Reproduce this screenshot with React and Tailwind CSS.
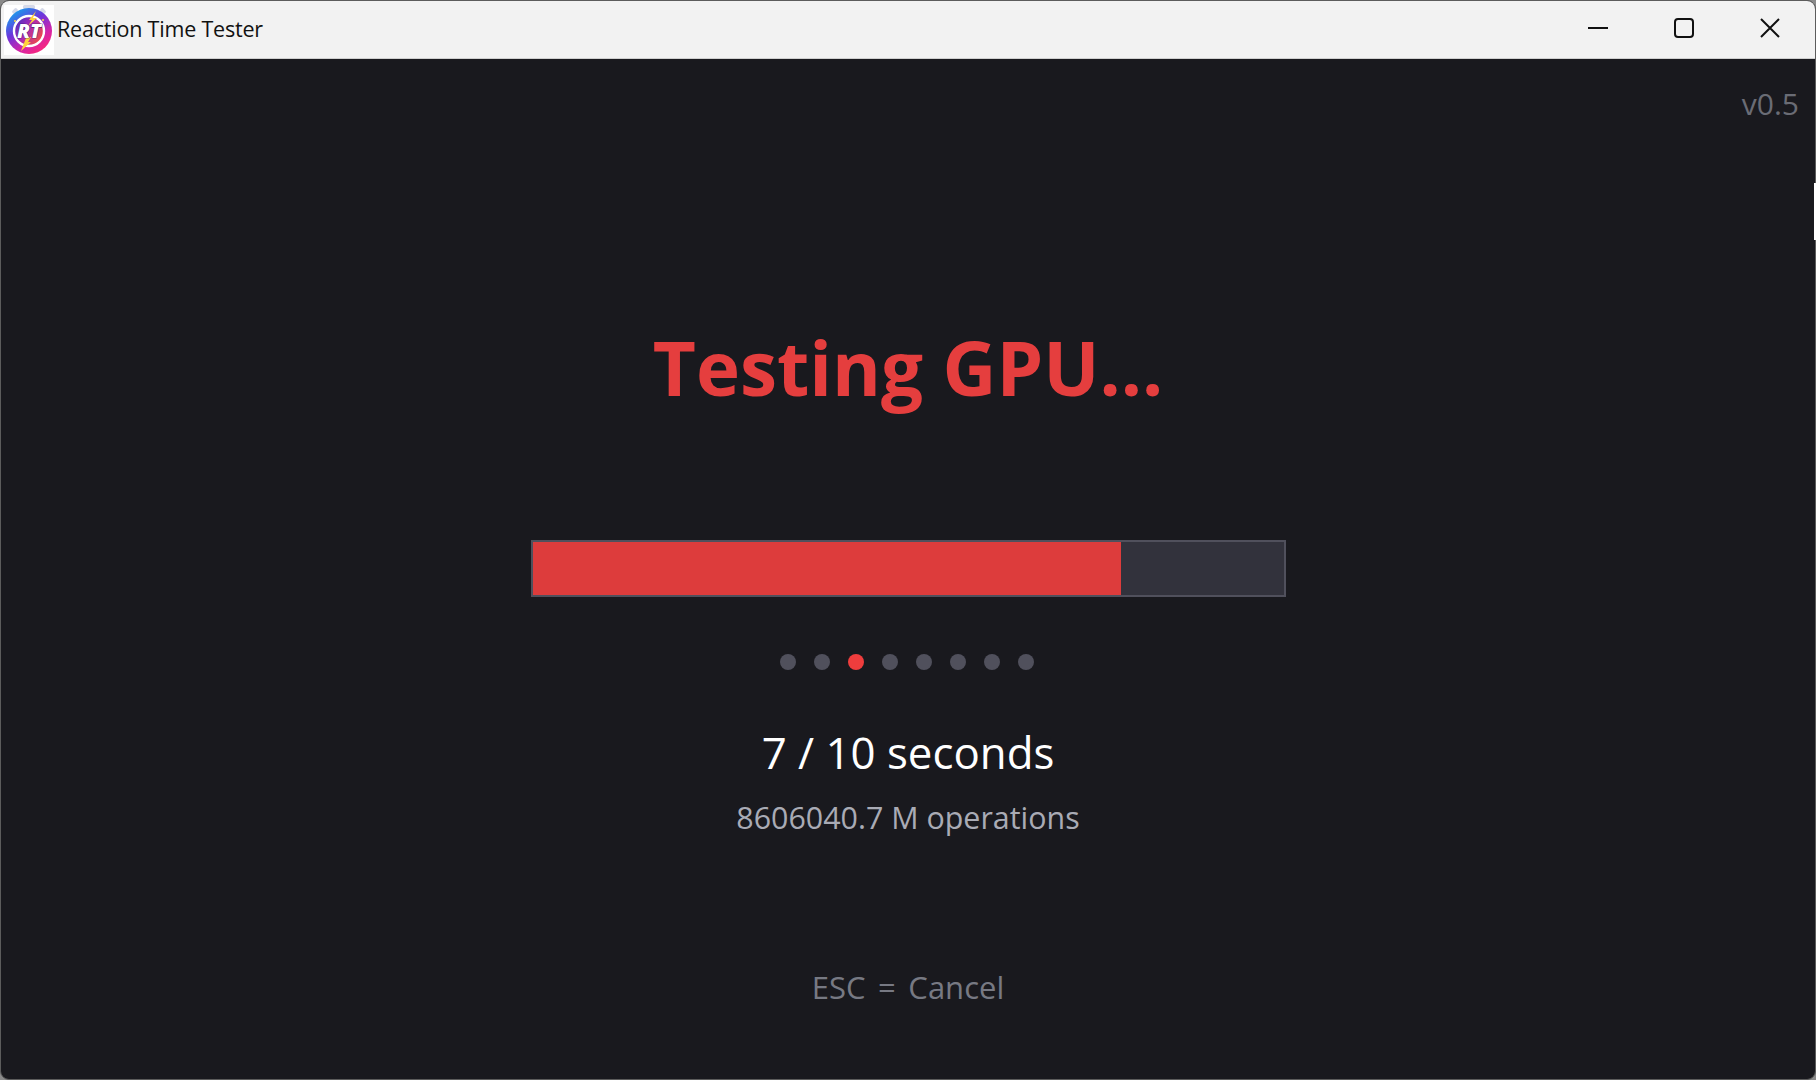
import React from 'react';

const font = { fontFamily: '"Open Sans", "Noto Sans", sans-serif' };

const Logo = () => (
  <svg width="50" height="50" viewBox="0 0 50 50" className="shrink-0">
    <defs>
      <linearGradient id="ring" x1="0.15" y1="0.05" x2="0.75" y2="0.95">
        <stop offset="0" stopColor="#12a5ee" />
        <stop offset="0.4" stopColor="#6b35dc" />
        <stop offset="0.75" stopColor="#d424a8" />
        <stop offset="1" stopColor="#f8287c" />
      </linearGradient>
      <linearGradient id="face" x1="0" y1="0" x2="1" y2="0.7">
        <stop offset="0" stopColor="#2436c4" />
        <stop offset="0.5" stopColor="#a928b8" />
        <stop offset="1" stopColor="#f7503a" />
      </linearGradient>
    </defs>
    <rect width="50" height="50" fill="#ffffff" />
    <rect x="19" y="0" width="12" height="4" rx="1.5" fill="#d5d9e8" />
    <rect x="8" y="4" width="6" height="4" rx="1.5" transform="rotate(-45 11 6)" fill="#d5d9e8" />
    <rect x="36" y="4" width="6" height="4" rx="1.5" transform="rotate(45 39 6)" fill="#d5d9e8" />
    <circle cx="25" cy="26" r="23" fill="url(#ring)" />
    <circle cx="25" cy="26" r="16" fill="url(#face)" />
    <circle cx="25" cy="26" r="15" fill="none" stroke="#ffffff" strokeWidth="2.4" />
    <circle cx="11" cy="16" r="1" fill="#ffe14a" />
    <circle cx="39" cy="15" r="1" fill="#ffe14a" />
    <path d="M32 6 L25 15 L28 15 L24 21 L33 13 L29 13 Z" fill="#ffd23c" />
    <path d="M22 33 L17 46 L27 37 L24 37 L27 32 Z" fill="#ffd23c" />
    <text x="25" y="33" textAnchor="middle" fontSize="20" fontWeight="800" fontStyle="italic" fill="#ffffff" stroke="#23145e" strokeWidth="0.7" paintOrder="stroke" style={font}>RT</text>
  </svg>
);

const Dot = ({ active }) => (
  <div className={`size-4 rounded-full ${active ? 'bg-[#ef3d3d]' : 'bg-[#50505c]'}`} />
);

export default function App() {
  const dots = [0, 1, 2, 3, 4, 5, 6, 7];

  return (
    <div className="relative w-[1816px] h-[1080px] bg-[#8a8a8a] overflow-hidden" style={font}>
      <div className="flex flex-col h-full rounded-[9px] border border-[#5c5c5c] overflow-hidden bg-[#19191e]">
        {/* title bar */}
        <div className="flex items-center h-[58px] shrink-0 bg-[#f2f2f2] border-b border-[#cfcfcf]">
          <div className="ml-[3px]"><Logo /></div>
          <span className="ml-[3px] text-[21.5px] text-[#111111] tracking-[-0.2px]">Reaction Time Tester</span>
          <div className="ml-auto flex items-center pr-[2px] pb-[3px]">
            <div className="w-[86px] h-[54px] flex items-center justify-center">
              <svg width="20" height="20" viewBox="0 0 20 20"><path d="M0 10H20" stroke="#111" strokeWidth="2" /></svg>
            </div>
            <div className="w-[86px] h-[54px] flex items-center justify-center">
              <svg width="20" height="20" viewBox="0 0 20 20"><rect x="1" y="1" width="18" height="18" rx="3" fill="none" stroke="#111" strokeWidth="2" /></svg>
            </div>
            <div className="w-[86px] h-[54px] flex items-center justify-center">
              <svg width="20" height="20" viewBox="0 0 20 20"><path d="M1 1L19 19M19 1L1 19" stroke="#111" strokeWidth="2" /></svg>
            </div>
          </div>
        </div>

        {/* main */}
        <div className="flex-1 flex flex-col items-center">
          <div className="self-end pr-[16px] pt-[24px] text-[30px] leading-[42px] text-[#6a6c75]">v0.5</div>
          <h1 className="mt-[192px] text-[74.5px] leading-[100px] font-bold text-[#e53e3e]">Testing GPU...</h1>
          <div className="mt-[123px] w-[755px] h-[57px] bg-[#32323c] border-2 border-[#50505c]">
            <div className="h-full w-[78.3%] bg-[#dd3c3c]" />
          </div>
          <div className="mt-[57px] mr-[2px] flex gap-[18px]">
            {dots.map((i) => <Dot key={i} active={i === 2} />)}
          </div>
          <div className="mt-[52px] text-[43.8px] leading-[60px] text-white">7 / 10 seconds</div>
          <div className="mt-[14px] text-[30.4px] leading-[44px] text-[#a9abb5]">8606040.7 M operations</div>
          <div className="mt-[125px] text-[31px] leading-[44px] [word-spacing:4.5px] text-[#777983]">ESC = Cancel</div>
        </div>
      </div>
      <div className="absolute right-0 top-[183px] w-[2px] h-[57px] bg-white" />
    </div>
  );
}
